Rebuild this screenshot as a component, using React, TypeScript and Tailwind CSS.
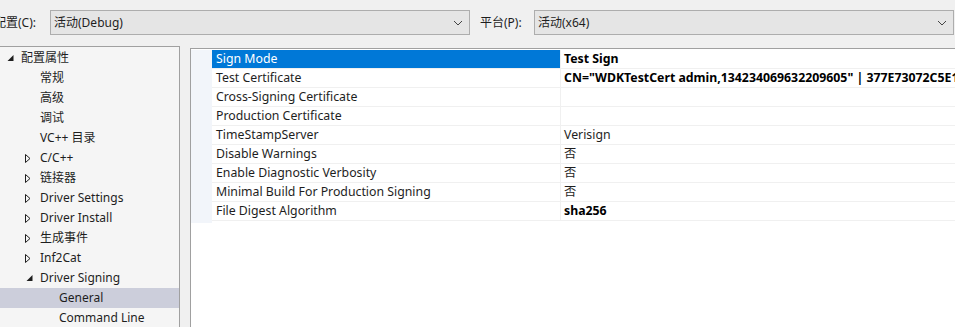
import React from "react";

type TreeItem = {
  label: string;
  level: number;
  arrow?: "open" | "closed";
  selected?: boolean;
};

const tree: TreeItem[] = [
  { label: "配置属性", level: 0, arrow: "open" },
  { label: "常规", level: 1 },
  { label: "高级", level: 1 },
  { label: "调试", level: 1 },
  { label: "VC++ 目录", level: 1 },
  { label: "C/C++", level: 1, arrow: "closed" },
  { label: "链接器", level: 1, arrow: "closed" },
  { label: "Driver Settings", level: 1, arrow: "closed" },
  { label: "Driver Install", level: 1, arrow: "closed" },
  { label: "生成事件", level: 1, arrow: "closed" },
  { label: "Inf2Cat", level: 1, arrow: "closed" },
  { label: "Driver Signing", level: 1, arrow: "open" },
  { label: "General", level: 2, selected: true },
  { label: "Command Line", level: 2 },
];

const props: { name: string; value: string; bold?: boolean }[] = [
  { name: "Sign Mode", value: "Test Sign", bold: true },
  { name: "Test Certificate", value: 'CN="WDKTestCert admin,134234069632209605" | 377E73072C5E1F2A', bold: true },
  { name: "Cross-Signing Certificate", value: "" },
  { name: "Production Certificate", value: "" },
  { name: "TimeStampServer", value: "Verisign" },
  { name: "Disable Warnings", value: "否" },
  { name: "Enable Diagnostic Verbosity", value: "否" },
  { name: "Minimal Build For Production Signing", value: "否" },
  { name: "File Digest Algorithm", value: "sha256", bold: true },
];

const font = { fontFamily: '"Noto Sans", "Noto Sans CJK SC", sans-serif' };

function Chevron() {
  return (
    <svg width="10" height="6" viewBox="0 0 10 6" className="text-[#444]">
      <path d="M1 1 L5 5 L9 1" fill="none" stroke="currentColor" strokeWidth="1" />
    </svg>
  );
}

function Arrow({ kind }: { kind?: "open" | "closed" }) {
  if (!kind) return <span className="w-[13px]" />;
  if (kind === "open")
    return (
      <svg width="13" height="8" viewBox="0 0 13 8">
        <path d="M8.5 1 L8.5 7 L2.5 7 Z" fill="#1e1e1e" />
      </svg>
    );
  return (
    <svg width="13" height="9" viewBox="0 0 13 9">
      <path d="M1.5 0.5 L1.5 8.5 L6 4.5 Z" fill="none" stroke="#1e1e1e" strokeWidth="1" />
    </svg>
  );
}

function Combo({ text, width }: { text: string; width: string }) {
  return (
    <div className={`${width} h-[25px] flex items-center justify-between bg-[#e5e5e5] border border-[#adadad] pl-[3px] pr-[6px]`}>
      <span>{text}</span>
      <Chevron />
    </div>
  );
}

export default function App() {
  return (
    <div className="w-[955px] h-[327px] overflow-hidden bg-[#f0f0f0] text-[12px] text-[#1e1e1e]" style={font}>
      {/* top combos */}
      <div className="h-[46px] flex items-start pt-[10px]">
        <div className="flex items-center h-[25px] -ml-[6px]">
          <span className="w-[56px]">配置(C):</span>
          <Combo text="活动(Debug)" width="w-[420px]" />
        </div>
        <div className="flex items-center h-[25px] ml-[10px]">
          <span className="w-[54px]">平台(P):</span>
          <Combo text="活动(x64)" width="w-[420px]" />
        </div>
      </div>

      <div className="flex items-start">
        {/* tree */}
        <div className="w-[181px] h-[300px] bg-[#f5f5f5] border-t border-r border-[#a0a0a0] pt-[1px]">
          {tree.map((t) => (
            <div
              key={t.label}
              className={`h-[20px] flex items-center w-[179px] ${t.selected ? "bg-[#cccedb]" : ""}`}
              style={{ paddingLeft: 2 + t.level * 19 }}
            >
              <span className="w-[19px] flex items-center justify-center">
                <Arrow kind={t.arrow} />
              </span>
              <span className="whitespace-nowrap">{t.label}</span>
            </div>
          ))}
        </div>

        {/* property grid */}
        <div className="ml-[10px] mt-[2px] flex-1 h-[300px] bg-white border-t border-l border-[#a0a0a0] flex text-[12.3px]">
          <div className="w-[21px] h-[173px] mt-[1px] bg-[#f2f5fa]" />
          <div className="flex-1 pt-[1px] overflow-hidden">
            {props.map((p, i) => (
              <div key={p.name} className="h-[19px] flex border-b border-[#f0f0f0]">
                <div
                  className={`w-[348px] shrink-0 pl-[4px] pt-[1px] flex items-center whitespace-nowrap ${
                    i === 0 ? "bg-[#0078d7] text-white" : ""
                  }`}
                >
                  {p.name}
                </div>
                <div
                  className={`flex-1 pl-[3px] pt-[1px] flex items-center whitespace-nowrap overflow-hidden border-l border-[#f0f0f0] ${
                    p.bold ? "font-bold text-black" : ""
                  }`}
                >
                  {p.value}
                </div>
              </div>
            ))}
          </div>
        </div>
      </div>
    </div>
  );
}
